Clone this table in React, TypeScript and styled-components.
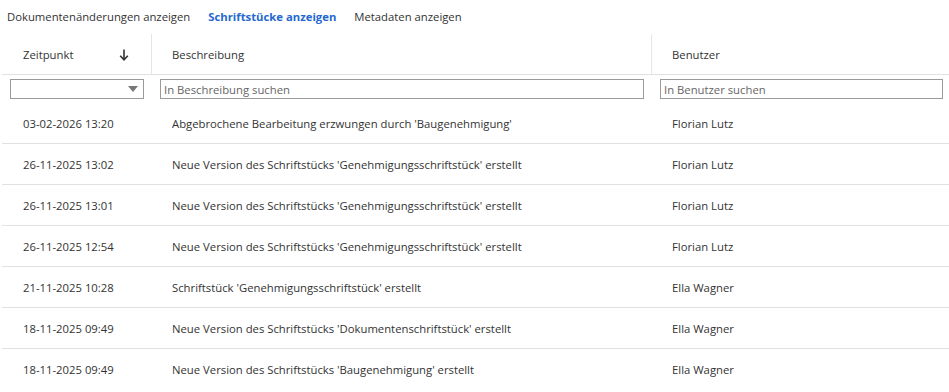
import React, { FC } from 'react';
import styled, { createGlobalStyle } from 'styled-components';

const TABS = [
  { id: 'changes', name: 'Dokumentenänderungen anzeigen' },
  { id: 'docs', name: 'Schriftstücke anzeigen' },
  { id: 'meta', name: 'Metadaten anzeigen' },
];

const ROWS = [
  { id: 1, time: '03-02-2026 13:20', text: "Abgebrochene Bearbeitung erzwungen durch 'Baugenehmigung'", user: 'Florian Lutz' },
  { id: 2, time: '26-11-2025 13:02', text: "Neue Version des Schriftstücks 'Genehmigungsschriftstück' erstellt", user: 'Florian Lutz' },
  { id: 3, time: '26-11-2025 13:01', text: "Neue Version des Schriftstücks 'Genehmigungsschriftstück' erstellt", user: 'Florian Lutz' },
  { id: 4, time: '26-11-2025 12:54', text: "Neue Version des Schriftstücks 'Genehmigungsschriftstück' erstellt", user: 'Florian Lutz' },
  { id: 5, time: '21-11-2025 10:28', text: "Schriftstück 'Genehmigungsschriftstück' erstellt", user: 'Ella Wagner' },
  { id: 6, time: '18-11-2025 09:49', text: "Neue Version des Schriftstücks 'Dokumentenschriftstück' erstellt", user: 'Ella Wagner' },
  { id: 7, time: '18-11-2025 09:49', text: "Neue Version des Schriftstücks 'Baugenehmigung' erstellt", user: 'Ella Wagner' },
];

const App: FC = () => {
  return (
    <>
      <GlobalStyle />
      <Page>
        <Tabs>
          {TABS.map((tab) => (
            <Tab key={tab.id} active={tab.id === 'docs'}>
              {tab.name}
            </Tab>
          ))}
        </Tabs>
        <Table>
          <HeaderRow>
            <HeaderCell divider>
              <span>Zeitpunkt</span>
              <SortIcon viewBox="0 0 10 12" width="10" height="12">
                <path d="M5 0.5V10.5" stroke="#333" strokeWidth="1.6" fill="none" />
                <path d="M1.2 6.8L5 10.8L8.8 6.8" stroke="#333" strokeWidth="1.6" fill="none" />
              </SortIcon>
            </HeaderCell>
            <HeaderCell divider>Beschreibung</HeaderCell>
            <HeaderCell>Benutzer</HeaderCell>
          </HeaderRow>
          <FilterRow>
            <FilterCell>
              <Select>
                <Caret viewBox="0 0 10 6" width="10" height="6">
                  <path d="M0 0H10L5 6Z" fill="#777" />
                </Caret>
              </Select>
            </FilterCell>
            <FilterCell>
              <SearchInput placeholder="In Beschreibung suchen" />
            </FilterCell>
            <FilterCell right>
              <SearchInput placeholder="In Benutzer suchen" />
            </FilterCell>
          </FilterRow>
          {ROWS.map((row, i) => (
            <Row key={row.id} last={i === ROWS.length - 1}>
              <Cell>{row.time}</Cell>
              <Cell>{row.text}</Cell>
              <Cell>{row.user}</Cell>
            </Row>
          ))}
        </Table>
      </Page>
    </>
  );
};

const GlobalStyle = createGlobalStyle`
  html, body {
    margin: 0;
    padding: 0;
    background: #fff;
  }
  body {
    font-family: 'Segoe UI', 'Open Sans', 'Noto Sans', sans-serif;
    font-size: 11.3px;
    color: #333;
  }
`;

const Page = styled.div`
  width: 949px;
  height: 392px;
  overflow: hidden;
`;

const Tabs = styled.div`
  display: flex;
  align-items: center;
  gap: 18px;
  height: 34px;
  padding: 0 0 2px 7px;
  box-sizing: border-box;
`;

const Tab = styled.span<{ active?: boolean }>`
  color: ${({ active }) => (active ? '#2468d0' : '#333')};
  font-weight: ${({ active }) => (active ? 700 : 400)};
  cursor: pointer;
`;

const Table = styled.div`
  margin-left: 2px;
`;

const Grid = styled.div`
  display: grid;
  grid-template-columns: 150px 500px 1fr;
`;

const HeaderRow = styled(Grid)`
  height: 41px;
  border-bottom: 1px solid #e1e1e1;
  box-sizing: border-box;
`;

const HeaderCell = styled.div<{ divider?: boolean }>`
  display: flex;
  align-items: center;
  justify-content: space-between;
  padding: 0 22px 0 20px;
  border-right: ${({ divider }) => (divider ? '1px solid #e6e6e6' : 'none')};
  span {
    margin-left: 1px;
  }
`;

const SortIcon = styled.svg`
  display: block;
  margin-top: 1px;
`;

const FilterRow = styled(Grid)`
  height: 28px;
  padding-top: 4px;
  box-sizing: border-box;
`;

const FilterCell = styled.div<{ right?: boolean }>`
  padding: ${({ right }) => (right ? '0 6px 0 8px' : '0 8px')};
`;

const Select = styled.div`
  height: 20px;
  box-sizing: border-box;
  border: 1px solid #9a9a9a;
  display: flex;
  align-items: center;
  justify-content: flex-end;
  padding-right: 5px;
`;

const Caret = styled.svg`
  display: block;
`;

const SearchInput = styled.input`
  width: 100%;
  height: 20px;
  box-sizing: border-box;
  border: 1px solid #9a9a9a;
  border-radius: 0;
  padding: 0 3px;
  font-family: inherit;
  font-size: 11.3px;
  color: #333;
  outline: none;
  &::placeholder {
    color: #666;
  }
`;

const Row = styled(Grid)<{ last?: boolean }>`
  height: 41px;
  border-bottom: ${({ last }) => (last ? 'none' : '1px solid #e1e1e1')};
  box-sizing: border-box;
`;

const Cell = styled.div`
  display: flex;
  align-items: center;
  padding-left: 20px;
  white-space: nowrap;
  &:first-child {
    padding-left: 21px;
  }
`;

export default App;
